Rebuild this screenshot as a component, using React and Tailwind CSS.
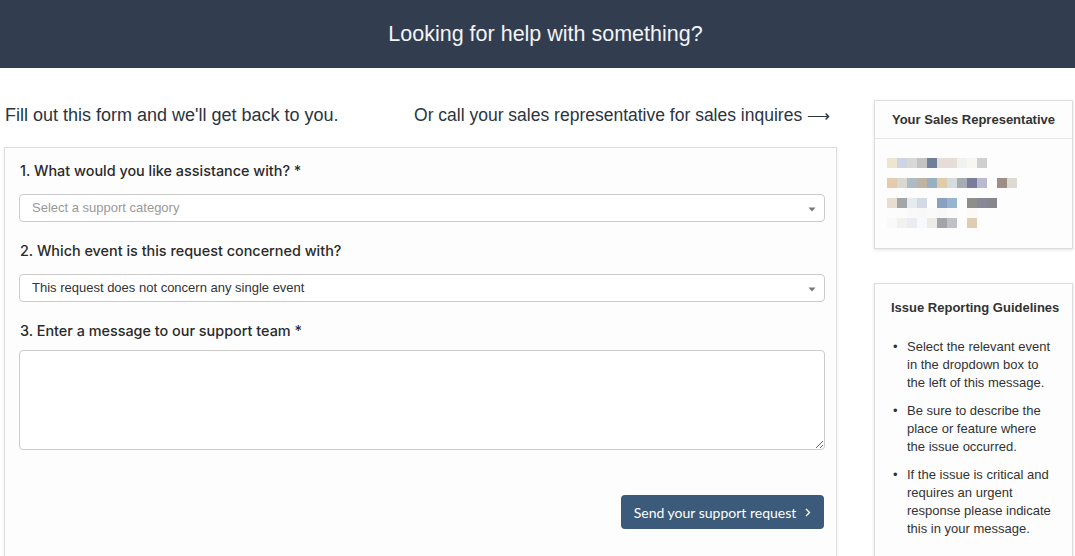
import React from "react";

const pixelRows = [
  { y: 0, cells: ["#ece5d0", "#cdd4e4", "#d8d9d6", "#c3c3c3", "#6f7f99", "#e7ddd8", "#e7ddd8", "#f0f1f1", "#f8f6f3", "#cfcfd1"] },
  { y: 20, cells: ["#e4cbae", "#d9d8d3", "#b0bac5", "#bfb3a4", "#9aafc1", "#e0cca9", "#d6dbde", "#a9abb3", "#7b7c9d", "#b8bad0", null, "#9e8f86", "#dcdad3"] },
  { y: 40, cells: ["#e8ddd3", "#a2a6a6", "#e6ebf0", "#d3dae4", null, "#8b9fc0", "#98b5cf", null, "#8e8e8b", "#878797", "#85878b"] },
  { y: 50, cells: ["#fcfcfc", "#fcfcfc", "#f9f9f9", "#f8f8f8", "#fafafa", "#f8f8f7", "#fbfbfb", null, "#fbfaf8"] },
  { y: 60, cells: ["#f9f9f9", "#f3f1ed", "#e9edf1", "#f7f9fb", "#ecebe6", "#a2a5a8", "#bfc1c7", null, "#e0cdb1"] },
];

function Pixels() {
  return (
    <svg width="130" height="70" viewBox="0 0 130 70" className="block">
      {pixelRows.map((r, ri) =>
        r.cells.map((c, ci) =>
          c ? <rect key={ri + "-" + ci} x={ci * 10} y={r.y} width="10" height="10" fill={c} /> : null
        )
      )}
    </svg>
  );
}

function Caret() {
  return (
    <svg width="8" height="5" viewBox="0 0 8 5" className="absolute right-[8px] top-[12px]">
      <path d="M0.5 0.5 H7.5 L4 4.5 Z" fill="#7a7a7a" />
    </svg>
  );
}

function SelectBox({ text, placeholder }) {
  return (
    <div className="relative h-[28px] rounded-[4px] border border-[#cccccc] bg-white flex items-center pl-[12px]">
      <span className={placeholder ? "text-[13px] text-[#999999]" : "text-[13px] text-[#333333]"}>{text}</span>
      <Caret />
    </div>
  );
}

function Label({ children }) {
  return (
    <div
      className="text-[14.4px] font-medium leading-[18px] text-[#2a2a2a] pl-[1px]"
      style={{ fontFamily: "Inter, sans-serif" }}
    >
      {children}
    </div>
  );
}

export default function App() {
  return (
    <div className="min-h-[556px] bg-white" style={{ fontFamily: '"Liberation Sans", Arial, sans-serif' }}>
      <div className="h-[68px] bg-[#323e4f] flex items-center justify-center pl-[16px]">
        <h1 className="text-[21.5px] text-[#f2f4f7]">Looking for help with something?</h1>
      </div>

      <div className="flex pt-[32px]">
        <div className="w-[833px] ml-[4px]">
          <div className="h-[31px] flex items-center justify-between pl-[1px] pr-[7px] mb-[16px] text-[#2b3441]">
            <span className="text-[18px]">Fill out this form and we'll get back to you.</span>
            <span className="text-[17.5px]">
              Or call your sales representative for sales inquires <span className="text-[16px]">⟶</span>
            </span>
          </div>

          <div className="border border-[#dddddd] bg-[#fdfdfd] shadow-[0_1px_3px_rgba(0,0,0,0.08)] pl-[14px] pr-[11px] pt-[14px] pb-[40px]">
            <Label>1. What would you like assistance with? *</Label>
            <div className="mt-[14px]">
              <SelectBox text="Select a support category" placeholder />
            </div>

            <div className="mt-[20px]">
              <Label>2. Which event is this request concerned with?</Label>
            </div>
            <div className="mt-[14px]">
              <SelectBox text="This request does not concern any single event" />
            </div>

            <div className="mt-[20px]">
              <Label>3. Enter a message to our support team *</Label>
            </div>
            <textarea className="mt-[10px] block w-full h-[100px] rounded-[4px] border border-[#cccccc] bg-white outline-none"></textarea>

            <div className="flex justify-end mt-[45px] pr-[1px]">
              <button
                className="h-[34px] w-[203px] rounded-[4px] bg-[#3c5a79] text-white text-[14px] flex items-center justify-center gap-[9px]"
                style={{ fontFamily: "Lato, sans-serif" }}
              >
                <span>Send your support request</span>
                <svg width="6" height="9" viewBox="0 0 6 9">
                  <path d="M1 1 L4.5 4.5 L1 8" fill="none" stroke="white" strokeWidth="1.4" />
                </svg>
              </button>
            </div>
          </div>
        </div>

        <div className="w-[199px] ml-[37px] flex flex-col gap-[34px]">
          <div className="border border-[#dddddd] bg-[#fdfdfd] shadow-[0_1px_3px_rgba(0,0,0,0.12)]">
            <div className="h-[38px] border-b border-[#e5e5e5] flex items-center justify-center text-[13px] font-bold text-[#333333] pt-[1px]">
              Your Sales Representative
            </div>
            <div className="pl-[12px] pt-[19px] pb-[20px]">
              <Pixels />
            </div>
          </div>

          <div className="border border-[#dddddd] bg-[#fdfdfd] shadow-[0_1px_3px_rgba(0,0,0,0.12)] pl-[16px] pt-[15px] pb-[40px] text-[13px] text-[#333333]">
            <div className="font-bold leading-[18px]">Issue Reporting Guidelines</div>
            <ul className="mt-[21px] flex flex-col gap-[10px] leading-[18px]">
              {[
                ["Select the relevant event", "in the dropdown box to", "the left of this message."],
                ["Be sure to describe the", "place or feature where", "the issue occurred."],
                ["If the issue is critical and", "requires an urgent", "response please indicate", "this in your message."],
              ].map((lines, i) => (
                <li key={i} className="flex whitespace-nowrap">
                  <span className="w-[16px] pl-[2px] text-[13px]">•</span>
                  <span>
                    {lines.map((l, j) => (
                      <React.Fragment key={j}>
                        {l}
                        {j < lines.length - 1 && <br />}
                      </React.Fragment>
                    ))}
                  </span>
                </li>
              ))}
            </ul>
          </div>
        </div>
      </div>
    </div>
  );
}
